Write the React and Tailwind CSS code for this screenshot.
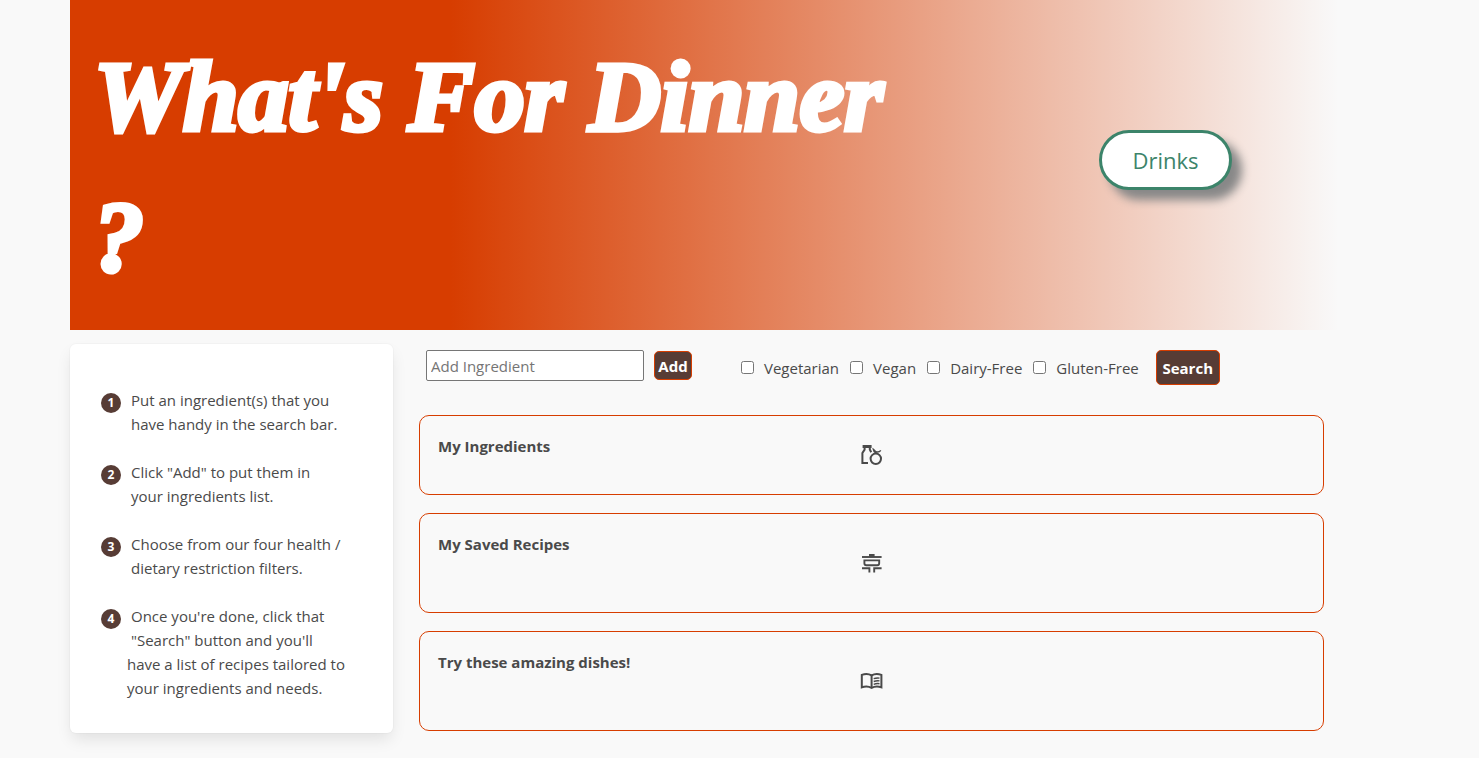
const steps = [
  [{ text: "Put an ingredient(s) that you" }, { text: "have handy in the search bar." }],
  [{ text: 'Click "Add" to put them in' }, { text: "your ingredients list." }],
  [{ text: "Choose from our four health /" }, { text: "dietary restriction filters." }],
  [
    { text: "Once you're done, click that" },
    { text: '"Search" button and you\'ll' },
    { text: "have a list of recipes tailored to", outdent: true },
    { text: "your ingredients and needs.", outdent: true },
  ],
];

const filters = ["Vegetarian", "Vegan", "Dairy-Free", "Gluten-Free"];

function GroceryIcon() {
  return (
    <svg viewBox="0 0 24 24" className="size-6" fill="none" stroke="currentColor" strokeWidth="2" aria-hidden="true">
      <path d="M2.6 2h9v3h-9z" fill="currentColor" stroke="none" />
      <path d="M4.6 4v2.6L2.4 10v10H8" />
      <path d="M9.8 4v2.4l1.4 2.8" />
      <circle cx="15.8" cy="15.8" r="5.2" />
      <path d="M16 10.2c-.3-2-1.1-3.2-2.8-4.2.2 2 1 3.2 2.8 4.2M15.8 8.8c2.2.4 4 0 5-1.4" strokeWidth="1.4" />
    </svg>
  );
}

function StockpotIcon() {
  return (
    <svg viewBox="0 0 24 24" className="size-6" fill="none" stroke="currentColor" strokeWidth="1.9" aria-hidden="true">
      <path d="M2 6h19.6" />
      <path d="M9 3h5.6v3H9z" fill="currentColor" stroke="none" />
      <path d="M4.4 9.4h14.8v2.8a2 2 0 0 1-2 2H6.4a2 2 0 0 1-2-2z" />
      <path d="M2 17.2h7.4V21.4M21.6 17.2h-7.4V21.4" />
    </svg>
  );
}

function BookIcon() {
  return (
    <svg viewBox="0 0 24 24" className="size-6" fill="none" stroke="currentColor" strokeWidth="2" aria-hidden="true">
      <path d="M11.6 6.4C9 4.8 5 4.6 1.8 5.9v12.4c3.2-1.1 7.2-.9 9.8.6 2.6-1.5 6.6-1.7 9.8-.6V5.9c-3.2-1.3-7.2-1.1-9.8.5z" />
      <path d="M11.6 6.4v12.5" />
      <path d="M13.7 9.7c1.9-.7 3.8-.9 5.8-.6M13.7 12.5c1.9-.7 3.8-.9 5.8-.6M13.7 15.3c1.9-.7 3.8-.9 5.8-.6" strokeWidth="1.4" />
    </svg>
  );
}

function Panel({ title, height, children }) {
  return (
    <section className={`${height} grid grid-cols-[1fr_auto_1fr] items-center rounded-[10px] border border-[#d73d00] px-[18px]`}>
      <h2 className="self-start pt-[18px] text-[15px] leading-6 font-bold">{title}</h2>
      {children}
    </section>
  );
}

export default function App() {
  return (
    <div className="min-h-screen bg-[#f9f9f9] pr-[140px] pb-6 pl-[70px] font-['Open_Sans',sans-serif] text-[15px] leading-6 text-[#4a4a4a]">
      <header className="flex items-center bg-[linear-gradient(to_right,#d73d00_30%,transparent)] pt-[27px] pr-[107px] pb-[23px] pl-6">
        <h1 className="w-[836px] font-['Liberation_Serif',serif] text-[100px] leading-[140px] font-bold text-white italic [-webkit-text-stroke:5px_white]">
          What's For Dinner
          <br />?
        </h1>
        <button className="mb-[14px] ml-auto h-[60px] w-[133px] rounded-full border-3 border-[#3c846a] bg-white text-[22px] text-[#3c846a] shadow-[10px_10px_10px_#888]">
          Drinks
        </button>
      </header>
      <main className="mt-[14px] flex items-start gap-[26px] pr-[15px]">
        <aside className="w-[323px] shrink-0 rounded-md bg-white pt-[44px] pr-5 pb-[33px] pl-[31px] shadow-[0_8px_16px_-2px_rgba(10,10,10,0.1),0_0_0_1px_rgba(10,10,10,0.02)]">
          <ol className="flex flex-col gap-6">
            {steps.map((lines, i) => (
              <li key={i} className="flex gap-[6px]">
                <span className="mt-[5px] grid size-5 shrink-0 place-items-center rounded-full bg-[#573c35] text-xs leading-5 font-bold text-white">
                  {i + 1}
                </span>
                <p className="whitespace-nowrap">
                  {lines.map((line) => (
                    <span key={line.text} className={line.outdent ? "block" : "block pl-1"}>
                      {line.text}
                    </span>
                  ))}
                </p>
              </li>
            ))}
          </ol>
        </aside>
        <div className="min-w-0 flex-1">
          <form className="mt-[6px] ml-[7px] flex items-start whitespace-nowrap" onSubmit={(e) => e.preventDefault()}>
            <input
              type="text"
              aria-label="Add Ingredient"
              placeholder="Add Ingredient"
              className="h-[31px] w-[218px] rounded-[2px] border border-[#767676] bg-white px-1 placeholder:text-[#757575]"
            />
            <button type="button" className="mt-px ml-[10px] h-[29px] w-[38px] rounded-[5px] border border-[#d73d00] bg-[#573c35] font-bold text-white">
              Add
            </button>
            <fieldset className="ml-[49px] flex h-[35px] items-center gap-[11px]">
              {filters.map((name) => (
                <label key={name} className="flex items-center gap-[10px]">
                  <input type="checkbox" className="size-[13px]" />
                  {name}
                </label>
              ))}
            </fieldset>
            <button type="submit" className="ml-[17px] h-[35px] w-16 rounded-[5px] border border-[#d73d00] bg-[#573c35] font-bold text-white">
              Search
            </button>
          </form>
          <div className="mt-[30px] flex flex-col gap-[18px]">
            <Panel title="My Ingredients" height="h-20">
              <GroceryIcon />
            </Panel>
            <Panel title="My Saved Recipes" height="h-[100px]">
              <StockpotIcon />
            </Panel>
            <Panel title="Try these amazing dishes!" height="h-[100px]">
              <BookIcon />
            </Panel>
          </div>
        </div>
      </main>
    </div>
  );
}
